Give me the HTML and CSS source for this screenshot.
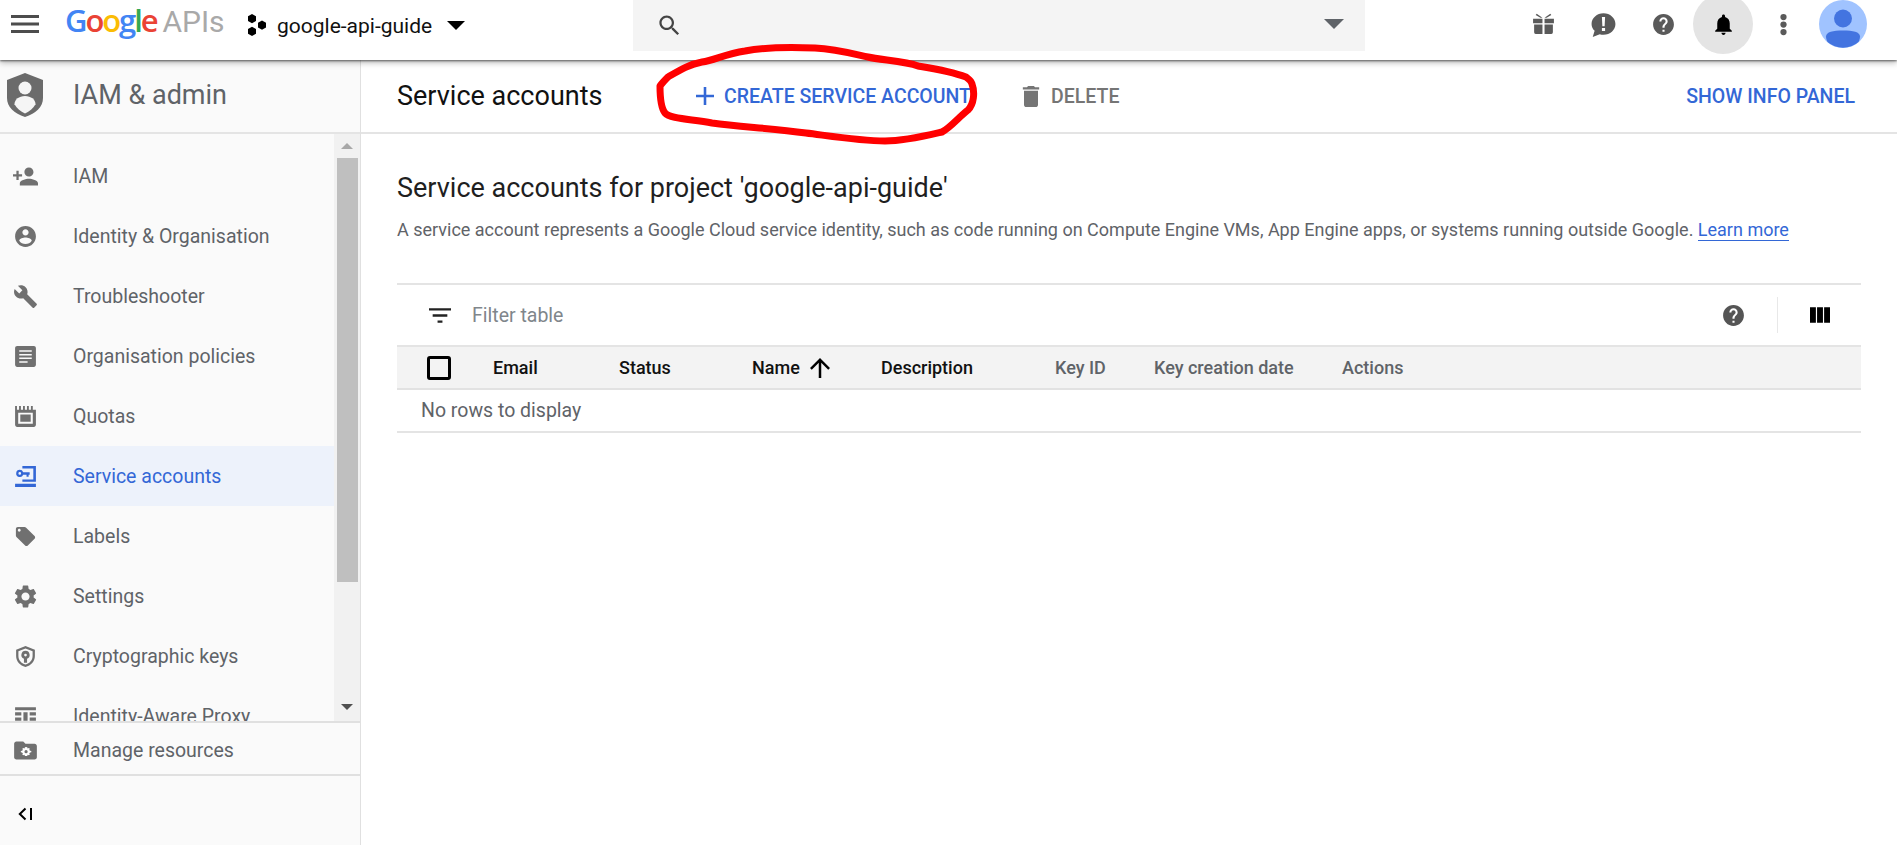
FILE: index.html
```html
<!DOCTYPE html>
<html lang="en">
<head>
  <meta charset="UTF-8" />
  <title>Service accounts - IAM &amp; admin</title>
  <link rel="stylesheet" href="styles.css">
</head>
<body>

  <!-- Top bar -->
  <header class="topbar">
    <svg class="menu-icon" viewBox="3 6 18 12" preserveAspectRatio="none"><path d="M3 18h18v-2H3v2zm0-5h18v-2H3v2zm0-7v2h18V6H3z"/></svg>
    <div class="logo">
      <span class="g-blue">G</span><span class="g-red">o</span><span class="g-yellow">o</span><span class="g-blue">g</span><span class="g-green">l</span><span class="g-red">e</span>
      <span class="logo-apis">APIs</span>
    </div>
    <div class="project">
      <svg class="hex-icon" viewBox="0 0 20 22">
        <path d="M5 0l4 2.300v4.600L5 9.200 1 6.900V2.300z"/>
        <path d="M15 6.500l4 2.300v4.600l-4 2.300-4-2.300V8.800z"/>
        <path d="M5 12.800l4 2.300v4.600L5 22l-4-2.300v-4.600z"/>
      </svg>
      <span class="project-name">google-api-guide</span>
      <svg class="project-caret" viewBox="7 10 10 5"><path d="M7 10l5 5 5-5z"/></svg>
    </div>
    <div class="search">
      <svg class="search-icon" viewBox="0 0 24 24"><path d="M15.500 14h-.79l-.28-.27C15.410 12.590 16 11.110 16 9.500 16 5.910 13.090 3 9.500 3S3 5.910 3 9.500 5.910 16 9.500 16c1.610 0 3.090-.59 4.230-1.570l.27.28v.79l5 4.990L20.490 19l-4.990-5zm-6 0C7.010 14 5 11.990 5 9.500S7.010 5 9.500 5 14 7.010 14 9.500 11.990 14 9.500 14z"/></svg>
      <svg class="search-caret" viewBox="7 10 10 5"><path d="M7 10l5 5 5-5z"/></svg>
    </div>
    <div class="top-actions">
      <span class="top-btn">
        <svg viewBox="0 0 24 24"><path d="M2 6.500h9v4.200H2zM13 6.500h9v4.200h-9zM3 12h8v9H4.500Q3 21 3 19.500zM13 12h8v7.500q0 1.500-1.500 1.500H13zM4.500 2.800l1-1.200L11 5.500H9zM19.500 2.800l-1-1.200L13 5.500h2z"/></svg>
      </span>
      <span class="top-btn">
        <svg viewBox="1 1 22 22"><path d="M12 2c5.800 0 10.500 4.200 10.500 9.500S17.800 21 12 21c-1.200 0-2.300-.2-3.300-.5L2.500 23l1.700-5.400C2.500 16 1.500 13.900 1.500 11.500 1.500 6.200 6.200 2 12 2z"/><path class="cut" d="M10.600 5.500h2.800l-.4 8h-2zM10.600 15h2.800v2.800h-2.800z"/></svg>
      </span>
      <span class="top-btn">
        <svg viewBox="0 0 24 24"><path d="M12 2C6.480 2 2 6.480 2 12s4.480 10 10 10 10-4.480 10-10S17.520 2 12 2zm1 17h-2v-2h2v2zm2.070-7.750l-.9.920C13.450 12.900 13 13.500 13 15h-2v-.5c0-1.100.45-2.100 1.170-2.830l1.240-1.260c.37-.36.59-.86.59-1.410 0-1.100-.9-2-2-2s-2 .9-2 2H8c0-2.210 1.790-4 4-4s4 1.790 4 4c0 .88-.36 1.680-.93 2.250z"/></svg>
      </span>
      <span class="top-btn active">
        <svg viewBox="0 0 24 24"><path d="M12 22c1.100 0 2-.9 2-2h-4c0 1.100.89 2 2 2zm6-6v-5c0-3.070-1.640-5.640-4.500-6.320V4c0-.83-.67-1.500-1.500-1.500s-1.500.67-1.500 1.500v.68C7.630 5.360 6 7.920 6 11v5l-2 2v1h16v-1l-2-2z"/></svg>
      </span>
      <span class="top-btn">
        <svg viewBox="0 0 24 24"><circle cx="12" cy="4.800" r="3"/><circle cx="12" cy="12" r="3"/><circle cx="12" cy="19.200" r="3"/></svg>
      </span>
      <span class="avatar">
        <svg viewBox="0 0 48 48">
          <circle cx="24" cy="24" r="24" fill="#a0c3ff"/>
          <circle cx="24" cy="18.500" r="9" fill="#4374e0"/>
          <path d="M8.500 42c-1-2-1.500-4-1.500-5.500C7 32 14 30.500 24 30.500S41 32 41 36.500c0 1.500-.5 3.500-1.500 5.500a24 24 0 0 1-31 0z" fill="#4374e0"/>
        </svg>
      </span>
    </div>
  </header>

  <div class="layout">

    <!-- Sidebar -->
    <aside class="sidebar">
      <div class="side-head">
        <svg class="shield" viewBox="0 0 36 44">
          <path d="M18 0l18 7v18c0 9-7 15.500-18 19C7 40.500 0 34 0 25V7z" fill="#6b6b6b"/>
          <circle cx="18" cy="15" r="6.500" fill="#f5f5f5"/>
          <path d="M18 23c6 0 10.500 3.600 10.500 8.200C26 35.500 22.500 38.500 18 40.500c-4.500-2-8-5-10.500-9.300C7.500 26.600 12 23 18 23z" fill="#f5f5f5"/>
        </svg>
        <span class="side-title">IAM &amp; admin</span>
      </div>

      <div class="side-scroll">
        <nav class="side-list">
          <a class="side-item">
            <svg viewBox="1 1 22 22"><path d="M15 12c2.210 0 4-1.790 4-4s-1.790-4-4-4-4 1.790-4 4 1.790 4 4 4zm-9-2V7H4v3H1v2h3v3h2v-3h3v-2H6zm9 4c-2.670 0-8 1.340-8 4v2h16v-2c0-2.660-5.330-4-8-4z"/></svg>
            <span>IAM</span>
          </a>
          <a class="side-item">
            <svg viewBox="0 0 24 24"><path d="M12 2C6.480 2 2 6.480 2 12s4.480 10 10 10 10-4.480 10-10S17.520 2 12 2zm0 3c1.660 0 3 1.340 3 3s-1.340 3-3 3-3-1.340-3-3 1.340-3 3-3zm0 14.200c-2.500 0-4.710-1.280-6-3.220.03-1.990 4-3.080 6-3.080 1.990 0 5.970 1.090 6 3.080-1.290 1.940-3.500 3.220-6 3.220z"/></svg>
            <span>Identity &amp; Organisation</span>
          </a>
          <a class="side-item">
            <svg viewBox="0 0 24 24"><path d="M22.700 19l-9.100-9.100c.9-2.300.4-5-1.500-6.900-2-2-5-2.400-7.400-1.300L9 6 6 9 1.600 4.700C.4 7.100.9 10.100 2.900 12.100c1.900 1.900 4.600 2.400 6.900 1.500l9.100 9.100c.4.4 1 .4 1.400 0l2.300-2.300c.5-.4.5-1.100.1-1.400z"/></svg>
            <span>Troubleshooter</span>
          </a>
          <a class="side-item">
            <svg viewBox="0 0 24 24"><path fill-rule="evenodd" d="M20 2H4C2.900 2 2 2.900 2 4v16c0 1.100.9 2 2 2h16c1.100 0 2-.9 2-2V4c0-1.100-.9-2-2-2zM6 6h12v1.500H6zM6 9.500h12V11H6zM6 13h12v1.500H6zM6 16.500h8V18H6z"/></svg>
            <span>Organisation policies</span>
          </a>
          <a class="side-item">
            <svg viewBox="0 0 24 24"><path fill-rule="evenodd" d="M2 2h1.800v3.500h2V2h1.800v3.500h2V2h1.800v3.500h2V2h1.800v3.500h2V2h1.800v3.500H22V20c0 1.100-.9 2-2 2H4c-1.100 0-2-.9-2-2zm3 6.500V19h14V8.500zM7 10h10v7H7z"/></svg>
            <span>Quotas</span>
          </a>
          <a class="side-item selected">
            <svg viewBox="0 0 24 24"><path fill-rule="evenodd" d="M6.500 5.500a3.500 3.500 0 0 1 3.300 2.300H16v2.500h-1v2h-2v-2H9.800A3.500 3.500 0 1 1 6.500 5.500zm0 2.200a1.300 1.300 0 1 0 0 2.600 1.300 1.300 0 0 0 0-2.600zM9 2h13v15H9v-2.200h10.500V4.200H9zM2 19h20v3H2z"/></svg>
            <span>Service accounts</span>
          </a>
          <a class="side-item">
            <svg viewBox="-1 -1 26 26"><path d="M21.410 11.580l-9-9C12.050 2.220 11.550 2 11 2H4c-1.100 0-2 .9-2 2v7c0 .55.22 1.050.59 1.420l9 9c.36.36.86.58 1.410.58.55 0 1.050-.22 1.410-.59l7-7c.37-.36.59-.86.59-1.410 0-.55-.23-1.060-.59-1.420zM5.500 7C4.670 7 4 6.330 4 5.500S4.670 4 5.500 4 7 4.670 7 5.500 6.330 7 5.500 7z"/></svg>
            <span>Labels</span>
          </a>
          <a class="side-item">
            <svg viewBox="1 1 22 22"><path d="M19.140 12.940c.04-.3.06-.61.06-.94 0-.32-.02-.64-.07-.94l2.030-1.580c.18-.14.23-.41.12-.61l-1.920-3.320c-.12-.22-.37-.29-.59-.22l-2.390.96c-.5-.38-1.030-.7-1.620-.94l-.36-2.540c-.04-.24-.24-.41-.48-.41h-3.840c-.24 0-.43.17-.47.41l-.36 2.540c-.59.24-1.130.57-1.620.94l-2.390-.96c-.22-.08-.47 0-.59.22L2.740 8.870c-.12.21-.08.47.12.61l2.030 1.580c-.05.3-.07.63-.07.94s.02.64.07.94l-2.030 1.580c-.18.14-.23.41-.12.61l1.920 3.320c.12.22.37.29.59.22l2.390-.96c.5.38 1.030.7 1.620.94l.36 2.540c.05.24.24.41.48.41h3.840c.24 0 .44-.17.47-.41l.36-2.540c.59-.24 1.130-.56 1.620-.94l2.390.96c.22.08.47 0 .59-.22l1.920-3.320c.12-.22.07-.47-.12-.61l-2.010-1.580zM12 15.600c-1.980 0-3.600-1.620-3.600-3.600s1.620-3.600 3.600-3.600 3.600 1.620 3.600 3.600-1.620 3.600-3.600 3.600z"/></svg>
            <span>Settings</span>
          </a>
          <a class="side-item">
            <svg viewBox="0 0 24 24"><path fill-rule="evenodd" d="M12 2l9 3.500v6c0 5.200-3.700 9.300-9 10.500-5.300-1.200-9-5.300-9-10.500v-6zm0 2.400L5.200 7v4.500c0 3.900 2.700 7.100 6.800 8.200 4.100-1.100 6.800-4.300 6.800-8.200V7zM12 6.500a4 4 0 0 1 1.500 7.700V18h-3v-3.800A4 4 0 0 1 12 6.500zm0 2.800a1.300 1.300 0 1 0 0 2.600 1.300 1.300 0 0 0 0-2.600z"/></svg>
            <span>Cryptographic keys</span>
          </a>
          <a class="side-item">
            <svg viewBox="0 0 24 24"><path d="M2 3h20v3H2zM2 8h6v3H2zM10 8h4v8h-4zM16 8h6v3h-6zM2 13h6v3H2zM16 13h6v3h-6zM2 18h20v3H2z"/></svg>
            <span>Identity-Aware Proxy</span>
          </a>
        </nav>
        <div class="side-scrollbar">
          <span class="arrow-up"></span>
          <span class="thumb"></span>
          <span class="arrow-down"></span>
        </div>
      </div>

      <a class="side-item side-foot">
        <svg viewBox="1 1 22 22"><path d="M20 6h-8l-2-2H4c-1.100 0-2 .9-2 2v12c0 1.100.9 2 2 2h16c1.100 0 2-.9 2-2V8c0-1.100-.9-2-2-2z"/><path class="cut" d="M12.500 9l1 .1.400 1.100 1.100-.4.800.7-.5 1 .8.800 1 .1v1.200l-1 .1-.8.800.5 1-.8.700-1.100-.4-.4 1.100h-2l-.4-1.100-1.100.4-.8-.7.5-1-.8-.8-1-.1v-1.200l1-.1.800-.8-.5-1 .8-.7 1.100.4.400-1.100z"/><circle cx="12.500" cy="13" r="1.400"/></svg>
        <span>Manage resources</span>
      </a>
      <div class="side-collapse">
        <svg viewBox="0 0 16 14"><path d="M8.500 1.500L2.800 7l5.700 5.500" fill="none" stroke="#000" stroke-width="2"/><path d="M13 1h2v12h-2z"/></svg>
      </div>
    </aside>

    <!-- Main content -->
    <main class="main">
      <div class="page-head">
        <h1 class="page-title">Service accounts</h1>
        <a class="act act-create">
          <svg viewBox="5 5 14 14"><path d="M19 13h-6v6h-2v-6H5v-2h6V5h2v6h6v2z"/></svg>
          CREATE SERVICE ACCOUNT
        </a>
        <a class="act act-delete">
          <svg viewBox="5 3 14 18"><path d="M6 19c0 1.100.9 2 2 2h8c1.100 0 2-.9 2-2V7H6v12zM19 4h-3.500l-1-1h-5l-1 1H5v2h14V4z"/></svg>
          DELETE
        </a>
        <a class="act act-info">SHOW INFO PANEL</a>
      </div>

      <div class="content">
        <h2 class="section-title">Service accounts for project 'google-api-guide'</h2>
        <p class="section-desc">A service account represents a Google Cloud service identity, such as code running on Compute Engine VMs, App Engine apps, or systems running outside Google. <a class="learn">Learn more</a></p>

        <div class="table">
          <div class="filter-row">
            <svg class="filter-icon" viewBox="3 6 18 12"><path d="M10 18h4v-2h-4v2zM3 6v2h18V6H3zm3 7h12v-2H6v2z"/></svg>
            <span class="filter-text">Filter table</span>
            <svg class="filter-help" viewBox="0 0 24 24"><path d="M12 2C6.480 2 2 6.480 2 12s4.480 10 10 10 10-4.480 10-10S17.520 2 12 2zm1 17h-2v-2h2v2zm2.070-7.750l-.9.920C13.450 12.900 13 13.500 13 15h-2v-.5c0-1.100.45-2.100 1.170-2.830l1.240-1.260c.37-.36.59-.86.59-1.410 0-1.100-.9-2-2-2s-2 .9-2 2H8c0-2.210 1.790-4 4-4s4 1.790 4 4c0 .88-.36 1.680-.93 2.250z"/></svg>
            <span class="filter-sep"></span>
            <svg class="filter-cols" viewBox="4 5 17 13"><path d="M10 18h5V5h-5v13zm-6 0h5V5H4v13zM16 5v13h5V5h-5z"/></svg>
          </div>
          <div class="table-head">
            <span class="cell-check"><span class="checkbox"></span></span>
            <span>Email</span>
            <span>Status</span>
            <span class="cell-name">Name
              <svg viewBox="4 4 16 16"><path d="M4 12l1.410 1.410L11 7.830V20h2V7.830l5.580 5.590L20 12l-8-8-8 8z"/></svg>
            </span>
            <span>Description</span>
            <span class="muted">Key ID</span>
            <span class="muted">Key creation date</span>
            <span class="muted">Actions</span>
          </div>
          <div class="table-empty">No rows to display</div>
        </div>
      </div>
    </main>
  </div>

  <!-- Hand-drawn marker round the create button -->
  <svg class="scribble" viewBox="0 0 1897 845">
    <path d="M660 86C660 98 661 108 665 113C670 119 690 119 712 123C740 127 770 128 806 133C830 136 860 141 885 141C905 141 925 136 942 132C950 128 960 116 968 110C974 104 975 92 972 84C971 80 968 79 966 77C950 71 930 68 918 66C905 61 880 60 868 57C850 53 835 49 815 48C790 47 760 48 745 51C725 54 715 60 702 62C690 64 680 70 668 77C665 80 662 83 660 86Z"/>
  </svg>

</body>
</html>
```

FILE: styles.css
```css
* { margin: 0; padding: 0; box-sizing: border-box; }

html, body {
  height: 100%;
  overflow: hidden;
  background: #fff;
  font-family: Roboto, "Liberation Sans", sans-serif;
}

svg { display: block; flex: none; fill: currentColor; }

.cut { fill: #fff; }

/* Top bar */
.topbar {
  position: relative;
  z-index: 5;
  display: flex;
  align-items: flex-start;
  height: 60px;
  padding-left: 11px;
  background: #fff;
  box-shadow: 0 1px 2px rgba(0, 0, 0, 0.55), 0 3px 6px rgba(0, 0, 0, 0.25);
}

.menu-icon {
  width: 28px;
  height: 18px;
  margin-top: 15px;
  color: #4d4d4d;
}

.logo {
  display: flex;
  align-items: baseline;
  width: 182px;
  margin-left: 26px;
  padding-top: 1px;
  font-family: "Open Sans", sans-serif;
  font-size: 31px;
  font-weight: 600;
  line-height: 38px;
  letter-spacing: -2.1px;
  white-space: nowrap;
}

.g-blue { color: #4285f4; }
.g-red { color: #ea4335; }
.g-yellow { color: #fbbc05; }
.g-green { color: #34a853; }

.logo-apis {
  margin-left: 6px;
  color: #a9a9a9;
  font-family: Roboto, sans-serif;
  font-size: 30px;
  font-weight: 400;
  letter-spacing: 0;
}

.project {
  display: flex;
  align-items: center;
  height: 51px;
  width: 386px;
}

.hex-icon { width: 20px; height: 22px; color: #000; margin-top: -2px; }

.project-name {
  margin-left: 10px;
  font-size: 21px;
  color: #111;
}

.project-caret { width: 18px; height: 9px; margin-left: 15px; color: #000; }

.search {
  display: flex;
  align-items: center;
  justify-content: space-between;
  width: 732px;
  height: 51px;
  padding: 0 21px 0 23px;
  background: #f4f4f4;
}

.search-icon { width: 27px; height: 27px; color: #444; }
.search-caret { width: 20px; height: 10px; color: #5f6368; margin-top: -4px; }

.top-actions {
  display: flex;
  align-items: center;
  height: 48px;
  margin-left: 148px;
}

.top-btn {
  display: flex;
  align-items: center;
  justify-content: center;
  width: 60px;
  height: 60px;
  flex: none;
  color: #5a5a5a;
  border-radius: 50%;
}

.top-btn svg { width: 25px; height: 25px; }

.top-btn.active { background: #e4e4e4; color: #000; }

.avatar { width: 48px; height: 48px; margin-left: 6px; }
.avatar svg { width: 48px; height: 48px; }

/* Page layout */
.layout {
  display: flex;
  height: 785px;
}

/* Sidebar */
.sidebar {
  display: flex;
  flex-direction: column;
  width: 361px;
  flex: none;
  background: #fafafa;
  border-right: 1px solid #e0e0e0;
}

.side-head {
  display: flex;
  align-items: center;
  height: 74px;
  flex: none;
  padding: 0 0 2px 7px;
  border-bottom: 2px solid #e4e4e4;
}

.shield { width: 36px; height: 44px; }

.side-title {
  margin-left: 30px;
  font-size: 27px;
  color: #5f6368;
}

.side-scroll {
  position: relative;
  display: flex;
  height: 587px;
  flex: none;
  overflow: hidden;
}

.side-list {
  width: 334px;
  flex: none;
  padding-top: 12px;
}

.side-item {
  display: flex;
  align-items: center;
  height: 60px;
  flex: none;
  padding-left: 13px;
  font-size: 19.500px;
  color: #5f6368;
}

.side-item svg {
  width: 25px;
  height: 25px;
  margin-right: 35px;
  color: #707070;
}

.side-item.selected {
  background: #edf2fb;
  color: #3367d6;
}

.side-item.selected svg { color: #3367d6; }

.side-scrollbar {
  position: relative;
  display: flex;
  flex-direction: column;
  align-items: center;
  width: 26px;
  background: #f1f1f1;
}

.thumb {
  display: block;
  width: 21px;
  height: 424px;
  background: #bfbfbf;
}

.arrow-up, .arrow-down {
  display: block;
  width: 0;
  height: 0;
  border-left: 6px solid transparent;
  border-right: 6px solid transparent;
}

.arrow-up {
  height: 6px;
  margin: 9px 0 9px;
  border-bottom: 6px solid #a8a8a8;
}

.arrow-down {
  margin-top: 122px;
  border-top: 6px solid #505050;
}

.side-foot {
  height: 55px;
  padding-top: 4px;
  border-top: 2px solid #e0e0e0;
  border-bottom: 2px solid #e0e0e0;
}

.side-foot svg { margin-right: 35px; }

.side-collapse {
  display: flex;
  align-items: center;
  height: 69px;
  padding: 6px 0 0 17px;
  color: #000;
}

.side-collapse svg { width: 16px; height: 14px; }

/* Main area */
.main {
  flex: 1;
  min-width: 0;
}

.page-head {
  display: flex;
  align-items: center;
  height: 74px;
  padding: 0 42px 0 36px;
  border-bottom: 2px solid #e4e4e4;
}

.page-title {
  width: 299px;
  font-size: 27px;
  font-weight: 400;
  color: #111;
}

.act {
  display: flex;
  align-items: center;
  font-size: 19.500px;
  font-weight: 500;
  white-space: nowrap;
}

.act-create { color: #3367d6; }
.act-create svg { width: 18px; height: 18px; margin-right: 10px; }

.act-delete { margin-left: 51px; color: #757575; }
.act-delete svg { width: 18px; height: 21px; margin-right: 11px; }

.act-info { margin-left: auto; color: #3367d6; }

.content {
  padding: 38px 36px 0;
}

.section-title {
  font-size: 27px;
  font-weight: 400;
  line-height: 32px;
  color: #1f1f1f;
}

.section-desc {
  margin-top: 14px;
  font-size: 18px;
  line-height: 24px;
  color: #5f6368;
  white-space: nowrap;
}

.learn {
  color: #3367d6;
  border-bottom: 1px solid #3367d6;
}

/* Table */
.table {
  width: 1464px;
  margin-top: 41px;
  font-size: 18px;
}

.filter-row {
  display: flex;
  align-items: center;
  height: 64px;
  border-top: 2px solid #e4e4e4;
  border-bottom: 2px solid #e4e4e4;
}

.filter-icon { width: 22px; height: 15px; margin-left: 32px; color: #222; }

.filter-text {
  margin-left: 21px;
  font-size: 19.500px;
  color: #80868b;
}

.filter-help { width: 25px; height: 25px; margin-left: auto; color: #555; }

.filter-sep {
  width: 1px;
  height: 36px;
  margin-left: 31px;
  background: #e8e8e8;
}

.filter-cols { width: 20px; height: 18px; margin: 0 31px 0 32px; color: #000; }

.table-head {
  display: grid;
  grid-template-columns: 96px 126px 133px 129px 174px 99px 188px 1fr;
  align-items: center;
  height: 43px;
  background: #f3f3f3;
  border-bottom: 2px solid #e2e2e2;
  font-size: 18px;
  font-weight: 500;
  color: #111;
}

.cell-check { display: flex; padding-left: 30px; }

.checkbox {
  width: 24px;
  height: 24px;
  border: 3px solid #000;
  border-radius: 3px;
}

.cell-name { display: flex; align-items: center; gap: 10px; }
.cell-name svg { width: 20px; height: 20px; color: #000; }

.muted { color: #5f6368; }

.table-empty {
  display: flex;
  align-items: center;
  height: 43px;
  padding-left: 24px;
  border-bottom: 2px solid #e4e4e4;
  font-size: 19.500px;
  color: #5f6368;
}

/* Red marker overlay */
.scribble {
  position: absolute;
  top: 0;
  left: 0;
  z-index: 10;
  width: 1897px;
  height: 845px;
  pointer-events: none;
}

.scribble path {
  fill: none;
  stroke: #f00;
  stroke-width: 7;
  stroke-linejoin: round;
}
```
